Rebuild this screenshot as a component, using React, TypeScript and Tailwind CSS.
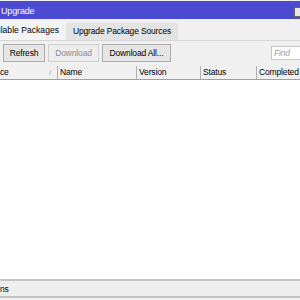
import React from "react";

const App = () => {
  return (
    <div className="w-[300px] h-[300px] overflow-hidden bg-[#f0f0f0] flex flex-col text-[8.5px] tracking-[-0.15px] text-black font-['Liberation_Sans',sans-serif]">
      {/* Title bar */}
      <div className="h-[18px] mt-[1px] bg-[#4b4bd2] flex items-center justify-between shrink-0">
        <span className="pl-[1px] pt-[3px] text-white text-[9px] leading-none">Upgrade</span>
        <div className="w-[6px] h-[10px] mt-[4px] bg-[#e8e8e8] border border-[#666] border-r-0" />
      </div>

      {/* Tabs */}
      <div className="flex items-end h-[22px] border-b border-[#d6d6d6] shrink-0">
        <div className="h-[19px] w-[65px] bg-[#f4f4f4] flex items-center justify-end pr-[6px] overflow-hidden whitespace-nowrap tracking-[0.05px]">
          ilable Packages
        </div>
        <div className="h-[17px] ml-[1px] w-[112px] bg-[#e3e3e3] flex items-center justify-center whitespace-nowrap">
          Upgrade Package Sources
        </div>
      </div>

      {/* Toolbar */}
      <div className="flex items-center h-[24px] shrink-0 pl-[3px] gap-[3px]">
        <button className="h-[18px] w-[42px] border border-[#adadad] bg-[#e5e5e5] leading-none">Refresh</button>
        <button className="h-[18px] w-[51px] border border-[#cfcfcf] bg-[#ededed] text-[#8c8c8c] leading-none">Download</button>
        <button className="h-[18px] w-[69px] border border-[#adadad] bg-[#e5e5e5] leading-none whitespace-nowrap">Download All...</button>
        <div className="ml-auto h-[14px] w-[29px] bg-white border border-[#c4c4c4] border-r-0 text-[#a0a0a0] italic pl-[2px] leading-[12px]">
          Find
        </div>
      </div>

      {/* Table */}
      <div className="flex-1 flex flex-col bg-white mt-[1px]">
        <div className="flex h-[14px] bg-[#f0f0f0] border-b border-[#a0a0a0] leading-[13px] whitespace-nowrap">
          <div className="w-[58px] border-r border-[#b0b0b0] flex justify-between pr-[6px]">
            <span>ce</span>
            <span className="text-[#999] text-[7px]">/</span>
          </div>
          <div className="w-[79px] border-r border-[#b0b0b0] pl-[2px]">Name</div>
          <div className="w-[64px] border-r border-[#b0b0b0] pl-[2px]">Version</div>
          <div className="w-[56px] border-r border-[#b0b0b0] pl-[2px]">Status</div>
          <div className="flex-1 pl-[2px]">Completed</div>
        </div>
      </div>

      {/* Status bar */}
      <div className="h-[17px] shrink-0 border-t-2 border-[#c4c4c4] bg-[#eeeeee] flex items-center">
        <span className="pt-[1px]">ns</span>
      </div>
      <div className="h-[2px] shrink-0 bg-[#c4c4c4]" />
      <div className="h-[2px] shrink-0" />
    </div>
  );
};

export default App;
